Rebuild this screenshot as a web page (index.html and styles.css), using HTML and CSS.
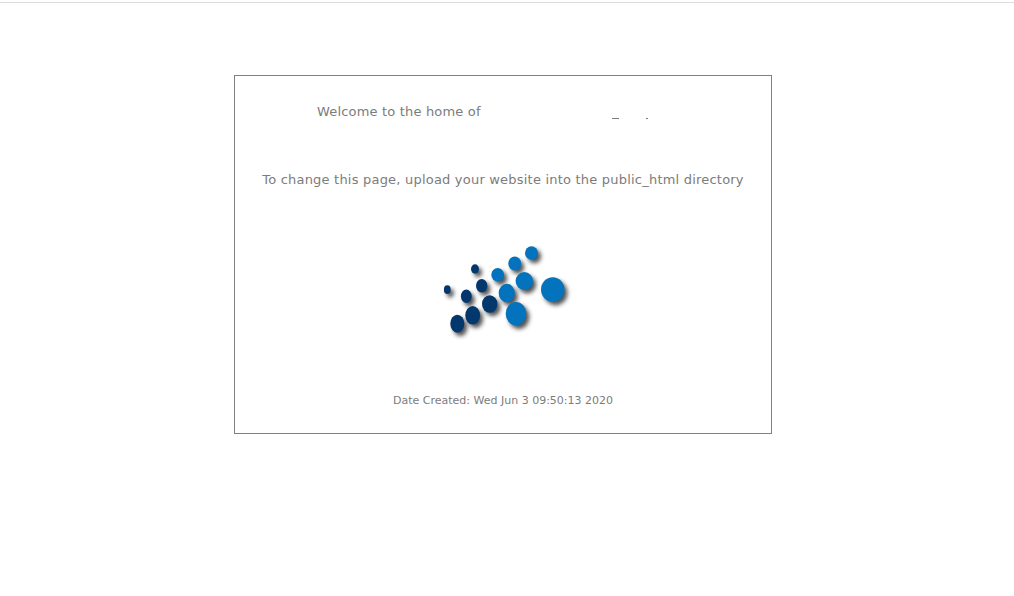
FILE: index.html
```html
<!DOCTYPE html>
<html lang="en">
<head>
<meta charset="utf-8">
<title>Welcome</title>
<link rel="stylesheet" href="styles.css">
</head>
<body>
<div class="rule"></div>
<main class="box">
  <div class="welcome">
    <span class="welcome-text">Welcome to the home of</span>
    <span class="marks"><i class="mark-a"></i><i class="mark-b"></i></span>
  </div>
  <p class="change">To change this page, upload your website into the public_html directory</p>
  <div class="logo">
    <svg width="140" height="100" viewBox="440 243 140 100" aria-hidden="true">
      <defs>
        <filter id="sh" x="-80%" y="-80%" width="260%" height="260%">
          <feGaussianBlur stdDeviation="2"/>
        </filter>
      </defs>
      <g fill="#333" opacity=".85" filter="url(#sh)" transform="translate(3 3.4)">
        <ellipse cx="552.7" cy="289.5" rx="11.7" ry="12.3"/>
        <ellipse cx="531.5" cy="253" rx="6.5" ry="6.8"/>
        <ellipse cx="514.7" cy="263.5" rx="6.4" ry="7"/>
        <ellipse cx="497.7" cy="274.7" rx="6.4" ry="6.8"/>
        <ellipse cx="475" cy="269" rx="4" ry="4.7"/>
        <ellipse cx="524.3" cy="281" rx="8.7" ry="9"/>
        <ellipse cx="506.7" cy="293" rx="8" ry="9.3"/>
        <ellipse cx="481.7" cy="285.7" rx="5.7" ry="6.7"/>
        <ellipse cx="447.3" cy="289.7" rx="3.4" ry="4.4"/>
        <ellipse cx="466.3" cy="296.3" rx="5.4" ry="6.7"/>
        <ellipse cx="489.7" cy="304" rx="7.7" ry="8.7"/>
        <ellipse cx="516" cy="313.7" rx="10.3" ry="11.8"/>
        <ellipse cx="472.7" cy="315.3" rx="7.4" ry="9.3"/>
        <ellipse cx="457.3" cy="323.7" rx="7" ry="9"/>
      </g>
      <g fill="#0373bd">
        <ellipse cx="552.7" cy="289.5" rx="11.7" ry="12.3"/>
        <ellipse cx="531.5" cy="253" rx="6.5" ry="6.8"/>
        <ellipse cx="514.7" cy="263.5" rx="6.4" ry="7"/>
        <ellipse cx="497.7" cy="274.7" rx="6.4" ry="6.8"/>
        <ellipse cx="524.3" cy="281" rx="8.7" ry="9"/>
        <ellipse cx="506.7" cy="293" rx="8" ry="9.3"/>
        <ellipse cx="516" cy="313.7" rx="10.3" ry="11.8"/>
      </g>
      <g fill="#04376b">
        <ellipse cx="475" cy="269" rx="4" ry="4.7"/>
        <ellipse cx="481.7" cy="285.7" rx="5.7" ry="6.7"/>
        <ellipse cx="447.3" cy="289.7" rx="3.4" ry="4.4"/>
        <ellipse cx="466.3" cy="296.3" rx="5.4" ry="6.7"/>
        <ellipse cx="489.7" cy="304" rx="7.7" ry="8.7"/>
        <ellipse cx="472.7" cy="315.3" rx="7.4" ry="9.3"/>
        <ellipse cx="457.3" cy="323.7" rx="7" ry="9"/>
      </g>
    </svg>
  </div>
  <p class="date">Date Created: Wed Jun 3 09:50:13 2020</p>
</main>
</body>
</html>
```
FILE: styles.css
```css
html, body {
  margin: 0;
  padding: 0;
  background: #fff;
}
body {
  font-family: "DejaVu Sans", Verdana, sans-serif;
  color: #7c7c7c;
}
.rule {
  height: 1px;
  margin-top: 2px;
  background: #ddd;
}
.box {
  box-sizing: border-box;
  width: 538px;
  height: 359px;
  margin: 72px 0 0 234px;
  border: 1px solid #808080;
}
.welcome {
  display: flex;
  height: 16px;
  margin-top: 28px;
  padding-left: 82px;
  font-size: 13px;
  line-height: 16px;
  letter-spacing: .18px;
}
.welcome-text {
  width: 164px;
  white-space: nowrap;
}
.marks {
  display: flex;
  align-items: flex-start;
  gap: 27px;
  margin: 14px 0 0 131px;
}
.marks i {
  display: block;
  height: 1px;
  background: #7c7c7c;
}
.mark-a { width: 7px; }
.mark-b { width: 2px; }
.change {
  margin: 52px 0 0;
  text-align: center;
  font-size: 13px;
  line-height: 16px;
  letter-spacing: .21px;
}
.logo {
  display: flex;
  justify-content: flex-start;
  margin: 55px 0 0 205px;
}
.logo svg {
  display: block;
}
.date {
  margin: 51px 0 0;
  text-align: center;
  font-size: 11px;
  line-height: 14px;
}
```
